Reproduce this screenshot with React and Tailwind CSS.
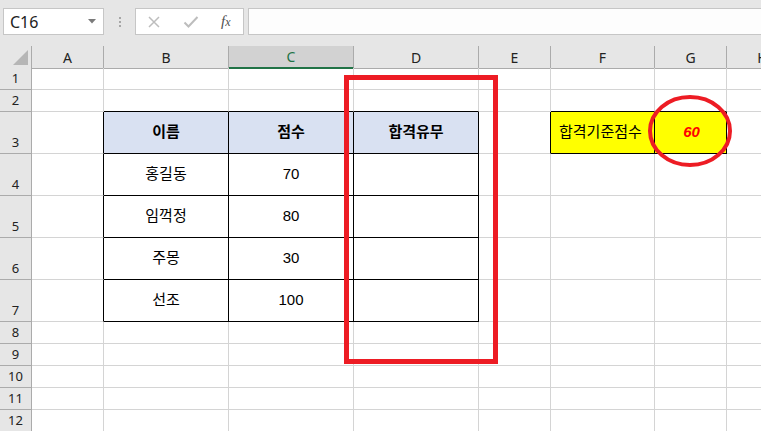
import React from 'react'

const COLS = ['A', 'B', 'C', 'D', 'E', 'F', 'G', 'H']
const ROWS = [
  { n: 1, h: 'h-[22px]' },
  { n: 2, h: 'h-[22px]' },
  { n: 3, h: 'h-[42px]' },
  { n: 4, h: 'h-[42px]' },
  { n: 5, h: 'h-[42px]' },
  { n: 6, h: 'h-[42px]' },
  { n: 7, h: 'h-[42px]' },
  { n: 8, h: 'h-[22px]' },
  { n: 9, h: 'h-[22px]' },
  { n: 10, h: 'h-[22px]' },
  { n: 11, h: 'h-[22px]' },
  { n: 12, h: 'h-[22px]' },
]

const GRID = 'grid grid-cols-[32px_72px_125px_125px_125px_72px_104px_72px_72px] w-[799px]'

const DATA = {
  B3: '이름', C3: '점수', D3: '합격유무',
  B4: '홍길동', C4: '70',
  B5: '임꺽정', C5: '80',
  B6: '주몽', C6: '30',
  B7: '선조', C7: '100',
  F3: '합격기준점수', G3: '60',
}

const inTable = (c, r) => ['B', 'C', 'D'].includes(c) && r >= 3 && r <= 7

function cellClass(c, r) {
  const cls = ['border-r border-b border-[#d4d4d4] flex items-center justify-center min-w-0 text-[15px] whitespace-nowrap']
  const box = inTable(c, r) || (['F', 'G'].includes(c) && r === 3)
  if (box) cls.push('border-r-black border-b-black')
  if (['B', 'C', 'D', 'F', 'G'].includes(c) && r === 2) cls.push('border-b-black')
  if (c === 'A' && r >= 3 && r <= 7) cls.push('border-r-black')
  if (c === 'E' && r === 3) cls.push('border-r-black')
  if (r === 3 && ['B', 'C', 'D'].includes(c)) cls.push('bg-[#d9e1f2] font-bold')
  if (r === 3 && ['F', 'G'].includes(c)) cls.push('bg-[#ffff00]')
  if (c === 'F' && r === 3) cls.push('justify-start pl-2')
  if (c === 'G' && r === 3) cls.push('text-[#ff0000] italic font-bold pl-[2px]')
  else cls.push('text-black')
  return cls.join(' ')
}

function FormulaBar() {
  return (
    <div className="flex items-start h-[46px] pt-2 bg-[#e6e6e6]">
      <div className="ml-[3px] w-[101px] h-[27px] border border-[#c6c6c6] bg-white flex items-center justify-between pl-[6px] pr-[7px]">
        <span className="text-[16px] text-[#222] leading-none" style={{ fontFamily: '"Noto Sans", sans-serif' }}>C16</span>
        <svg width="8" height="5" viewBox="0 0 8 5"><path d="M0 0h8L4 4.5z" fill="#7a7a7a" /></svg>
      </div>
      <div className="w-[31px] h-[27px] flex flex-col items-center justify-center gap-[2px]">
        <span className="w-[2px] h-[2px] bg-[#a6a6a6]" />
        <span className="w-[2px] h-[2px] bg-[#a6a6a6]" />
        <span className="w-[2px] h-[2px] bg-[#a6a6a6]" />
      </div>
      <div className="w-[109px] h-[27px] border border-[#c6c6c6] bg-white flex items-center pl-[10px]">
        <svg width="14" height="14" viewBox="0 0 14 14" className="ml-[1px]">
          <path d="M2 2l10 10M12 2L2 12" stroke="#bdbdbd" strokeWidth="1.5" />
        </svg>
        <svg width="16" height="14" viewBox="0 0 16 14" className="ml-[22px]">
          <path d="M1.5 7.5l4 4L14.5 2" stroke="#bdbdbd" strokeWidth="2" fill="none" />
        </svg>
        <span
          className="ml-[22px] text-[15px] italic text-[#4f4f4f] leading-none"
          style={{ fontFamily: '"Liberation Serif", serif' }}
        >
          f<span className="text-[12px]">x</span>
        </span>
      </div>
      <div className="ml-1 flex-1 h-[27px] border border-r-0 border-[#c6c6c6] bg-[#fdfdfd]" />
    </div>
  )
}

function ColumnHeader() {
  return (
    <div className={`${GRID} h-[22px] bg-[#e6e6e6]`} style={{ fontFamily: '"Noto Sans", sans-serif' }}>
      <div className="border-r border-b border-[#ababab] flex items-end justify-end pr-[3px] pb-[3px]">
        <svg width="15" height="15" viewBox="0 0 15 15"><path d="M15 0V15H0z" fill="#b6b6b6" /></svg>
      </div>
      {COLS.map(c => (
        <div
          key={c}
          className={
            c === 'C'
              ? 'border-r border-[#ababab] border-b-2 border-b-[#217346] bg-[#d2d2d2] text-[#217346] text-[14px] flex items-center justify-center'
              : 'border-r border-b border-[#ababab] text-[#222] text-[14px] flex items-center justify-center'
          }
        >
          {c}
        </div>
      ))}
    </div>
  )
}

export default function App() {
  return (
    <div className="relative w-[761px] h-[431px] overflow-hidden bg-white" style={{ fontFamily: '"Liberation Sans", "Noto Sans CJK KR", sans-serif' }}>
      <FormulaBar />
      <ColumnHeader />
      {ROWS.map(row => (
        <div key={row.n} className={`${GRID} ${row.h}`}>
          <div
            className="bg-[#e6e6e6] border-r border-b border-[#ababab] flex items-end justify-center pb-[1px] text-[13px] text-[#222] leading-[20px]"
            style={{ fontFamily: '"Noto Sans", sans-serif' }}
          >
            {row.n}
          </div>
          {COLS.map(c => {
            const key = `${c}${row.n}`
            return (
              <div key={key} className={cellClass(c, row.n)}>
                {DATA[key]}
              </div>
            )
          })}
        </div>
      ))}

      {/* red markup over the sheet */}
      <div className="absolute left-[344px] top-[75px] w-[154px] h-[289px] border-[5px] border-[#ed1c24] pointer-events-none" />
      <svg className="absolute left-[646px] top-[93px] pointer-events-none" width="88" height="76" viewBox="0 0 88 76">
        <ellipse cx="44" cy="38" rx="40" ry="34" fill="none" stroke="#ed1c24" strokeWidth="4" />
      </svg>
    </div>
  )
}
